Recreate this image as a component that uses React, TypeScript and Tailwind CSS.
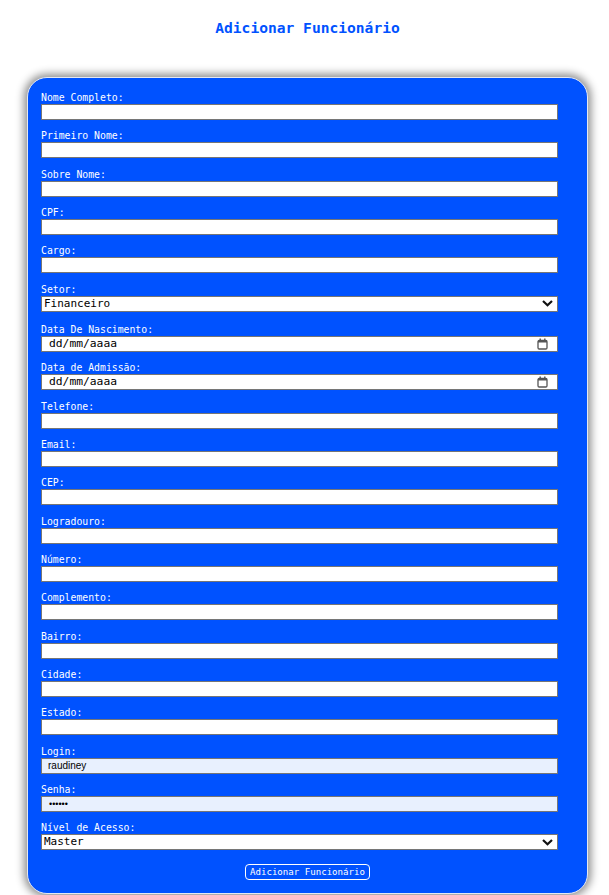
import React from "react";

type Field = {
  label: string;
  kind: "text" | "select" | "date" | "login" | "senha";
  value?: string;
};

const FIELDS: Field[] = [
  { label: "Nome Completo:", kind: "text" },
  { label: "Primeiro Nome:", kind: "text" },
  { label: "Sobre Nome:", kind: "text" },
  { label: "CPF:", kind: "text" },
  { label: "Cargo:", kind: "text" },
  { label: "Setor:", kind: "select", value: "Financeiro" },
  { label: "Data De Nascimento:", kind: "date" },
  { label: "Data de Admissão:", kind: "date" },
  { label: "Telefone:", kind: "text" },
  { label: "Email:", kind: "text" },
  { label: "CEP:", kind: "text" },
  { label: "Logradouro:", kind: "text" },
  { label: "Número:", kind: "text" },
  { label: "Complemento:", kind: "text" },
  { label: "Bairro:", kind: "text" },
  { label: "Cidade:", kind: "text" },
  { label: "Estado:", kind: "text" },
  { label: "Login:", kind: "login", value: "raudiney" },
  { label: "Senha:", kind: "senha", value: "••••••" },
  { label: "Nível de Acesso:", kind: "select", value: "Master" },
];

const mono = "font-['DejaVu_Sans_Mono',monospace]";

function Chevron() {
  return (
    <svg width="11" height="7" viewBox="0 0 11 7">
      <path d="M1 1 L5.5 5.2 L10 1" fill="none" stroke="#111" strokeWidth="2.2" />
    </svg>
  );
}

function CalendarIcon() {
  return (
    <svg width="11" height="12" viewBox="0 0 11 12">
      <rect x="1" y="2.5" width="9" height="8.5" rx="1.2" fill="none" stroke="#555" strokeWidth="1.3" />
      <rect x="1" y="2.5" width="9" height="2" fill="#555" />
      <rect x="2.5" y="0.5" width="1.4" height="2.5" fill="#555" />
      <rect x="7.1" y="0.5" width="1.4" height="2.5" fill="#555" />
    </svg>
  );
}

function Control({ f }: { f: Field }) {
  const base = "flex items-center justify-between w-[517px] h-[16px] border border-[#767676] box-border";
  if (f.kind === "select") {
    return (
      <div className={`${base} bg-white border-[#6b6b6b] pl-[2px] pr-[4px]`}>
        <span className={`${mono} text-[11px] leading-[14px] text-black`}>{f.value}</span>
        <Chevron />
      </div>
    );
  }
  if (f.kind === "date") {
    return (
      <div className={`${base} bg-white pl-[7px] pr-[9px]`}>
        <span className={`${mono} text-[11.3px] leading-[14px] text-black`}>dd/mm/aaaa</span>
        <CalendarIcon />
      </div>
    );
  }
  if (f.kind === "login") {
    return (
      <div className={`${base} bg-[#e8f0fe] pl-[6px]`}>
        <span className="font-['Liberation_Sans',sans-serif] text-[10px] leading-[14px] text-black">{f.value}</span>
      </div>
    );
  }
  if (f.kind === "senha") {
    return (
      <div className={`${base} bg-[#e8f0fe] pl-[7px]`}>
        <span className="font-['Liberation_Sans',sans-serif] text-[9px] leading-[14px] text-black">{f.value}</span>
      </div>
    );
  }
  return <div className={`${base} bg-white`} />;
}

export default function App() {
  return (
    <div className="min-h-screen bg-white pt-[18px]">
      <div className="ml-[27px] w-[561px]">
        <h1 className={`${mono} text-center text-[14.6px] leading-[20px] font-bold text-[#0052ff]`}>
          Adicionar Funcionário
        </h1>
        <div className="mt-[39px] flex flex-col rounded-[20px] border border-[#e4e8f2] bg-[#0052ff] pl-[13px] pt-[13px] pb-[13px] shadow-[0_0_9px_3px_rgba(0,0,0,0.45)]">
          {FIELDS.map((f, i) => (
            <div key={i} className={i === 5 ? "mb-[11.5px]" : "mb-[9.33px]"}>
              <div className={`${mono} text-[9.8px] leading-[13px] text-white`}>{f.label}</div>
              <Control f={f} />
            </div>
          ))}
          <div className="flex justify-center pr-[13px] pt-[4px]">
            <button className={`${mono} h-[16px] rounded-[4px] border border-white px-[4px] text-[9.1px] leading-[14px] text-white`}>
              Adicionar Funcionário
            </button>
          </div>
        </div>
      </div>
    </div>
  );
}
